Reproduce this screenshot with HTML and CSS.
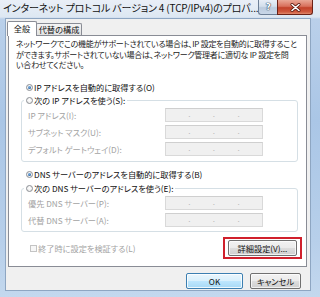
FILE: index.html
```html
<!DOCTYPE html>
<html lang="ja">
<head>
<meta charset="utf-8">
<title>TCP/IPv4</title>
<link rel="stylesheet" href="styles.css">
</head>
<body>
<div class="window">
  <div class="titlebar">
    <span class="title">インターネット プロトコル バージョン 4 (TCP/IPv4)のプロパ...</span>
    <div class="caption">
      <span class="cap-help">?</span>
      <span class="cap-close">
        <svg width="11" height="9" viewBox="0 0 11 9"><path d="M2 1.5 L9 7.5 M9 1.5 L2 7.5" stroke="#5a1a10" stroke-width="3" stroke-linecap="round"/><path d="M2 1.5 L9 7.5 M9 1.5 L2 7.5" stroke="#ffffff" stroke-width="1.6" stroke-linecap="round"/></svg>
      </span>
    </div>
  </div>
  <div class="client">
    <div class="tabs">
      <span class="tab active">全般</span>
      <span class="tab">代替の構成</span>
    </div>
    <div class="panel">
      <p class="desc">ネットワークでこの機能がサポートされている場合は、IP 設定を自動的に取得すること<br>ができます。サポートされていない場合は、ネットワーク管理者に適切な IP 設定を問<br>い合わせてください。</p>
      <div class="opt first"><span class="radio on"></span>IP アドレスを自動的に取得する(O)</div>
      <div class="group g1">
        <div class="legend"><span class="radio"></span>次の IP アドレスを使う(S):</div>
        <div class="row"><span class="lbl">IP アドレス(I):</span><span class="ip"><i>.</i><i>.</i><i>.</i></span></div>
        <div class="row"><span class="lbl">サブネット マスク(U):</span><span class="ip"><i>.</i><i>.</i><i>.</i></span></div>
        <div class="row"><span class="lbl">デフォルト ゲートウェイ(D):</span><span class="ip"><i>.</i><i>.</i><i>.</i></span></div>
      </div>
      <div class="opt second"><span class="radio on"></span>DNS サーバーのアドレスを自動的に取得する(B)</div>
      <div class="group g2">
        <div class="legend"><span class="radio"></span>次の DNS サーバーのアドレスを使う(E):</div>
        <div class="row"><span class="lbl">優先 DNS サーバー(P):</span><span class="ip"><i>.</i><i>.</i><i>.</i></span></div>
        <div class="row"><span class="lbl">代替 DNS サーバー(A):</span><span class="ip"><i>.</i><i>.</i><i>.</i></span></div>
      </div>
      <div class="bottom-row">
        <div class="check"><span class="box"></span>終了時に設定を検証する(L)</div>
        <span class="highlight"><span class="btn adv">詳細設定(V)...</span></span>
      </div>
    </div>
    <div class="buttons">
      <span class="btn ok">OK</span>
      <span class="btn cancel">キャンセル</span>
    </div>
  </div>
</div>
</body>
</html>
```

FILE: styles.css
```css
* { box-sizing: border-box; margin: 0; padding: 0; }
html, body { width: 320px; height: 297px; overflow: hidden; }
body {
  font-family: "Noto Sans CJK JP", "Noto Sans", sans-serif;
  font-feature-settings: "palt";
  font-size: 8.2px;
  color: #1b1b1b;
  background: #b8cfe9;
}
.window {
  width: 320px;
  height: 297px;
  display: flex;
  flex-direction: column;
  background: linear-gradient(180deg, #e9eff7 0px, #dde7f2 17px, #bad0ea 19px, #aac6e6 120px, #b7cfea 240px, #c3d8ee 297px);
}
.titlebar {
  height: 18px;
  flex: none;
  display: flex;
  align-items: flex-start;
  padding-left: 3px;
  padding-right: 7px;
}
.title {
  flex: 1;
  font-size: 10px;
  line-height: 15px;
  color: #111;
  white-space: nowrap;
  letter-spacing: -0.15px;
}
.caption { display: flex; }
.cap-help, .cap-close {
  height: 15px;
  display: flex;
  align-items: center;
  justify-content: center;
  border: 1px solid #6d7f96;
  border-top: none;
}
.cap-help {
  width: 19px;
  border-radius: 0 0 0 3px;
  border-right: none;
  background: linear-gradient(180deg, #e8eef6 0, #d3dfec 45%, #bccbdd 55%, #c9d7e8 100%);
  color: #fff;
  font-family: "DejaVu Sans", sans-serif;
  font-weight: bold;
  font-size: 9px;
  text-shadow: 0 0 1px #36485e, 0 0 1px #36485e, 0 0 1px #36485e;
}
.cap-close {
  width: 36px;
  border-radius: 0 0 3px 0;
  border-color: #6b2116;
  background: linear-gradient(180deg, #e9a796 0, #d8705c 45%, #c2412a 55%, #cf5a3f 85%, #e08a6d 100%);
}
.client {
  flex: 1;
  margin: 0 9px 6px 5px;
  background: #f0f0f0;
  border: 1px solid #8ea6c2;
  display: flex;
  flex-direction: column;
}
.tabs {
  display: flex;
  align-items: flex-end;
  padding-top: 2px;
  margin-left: 1px;
}
.tab {
  border: 1px solid #898c95;
  border-bottom: none;
  white-space: nowrap;
  text-align: center;
  color: #111;
}
.tab.active {
  position: relative;
  z-index: 1;
  width: 30px;
  height: 15px;
  line-height: 13px;
  margin-bottom: -1px;
  background: #fff;
  border-radius: 2px 2px 0 0;
}
.tab:not(.active) {
  width: 46px;
  height: 12px;
  line-height: 11px;
  margin-left: -1px;
  background: linear-gradient(180deg, #f4f4f4, #e2e2e2);
  border-radius: 2px 2px 0 0;
}
.panel {
  margin: 0 3px 0 2px;
  border: 1px solid #898c95;
  background: #fff;
  display: flex;
  flex-direction: column;
  padding-bottom: 7px;
}
.desc {
  margin: 3px 0 0 7px;
  line-height: 10.5px;
  white-space: nowrap;
  color: #222;
  font-size: 8px;
  letter-spacing: -0.25px;
}
.opt {
  display: flex;
  align-items: center;
  height: 12px;
  margin-left: 17px;
  white-space: nowrap;
  color: #111;
}
.opt.first { margin-top: 10.5px; }
.opt.second { margin-top: 6px; }
.radio {
  width: 7px;
  height: 7px;
  flex: none;
  border-radius: 50%;
  border: 1px solid #8b8e94;
  background: radial-gradient(circle at 50% 40%, #ffffff 0, #e6e6e6 100%);
  margin-right: 1px;
  display: flex;
  align-items: center;
  justify-content: center;
}
.radio.on::after {
  content: "";
  width: 3px;
  height: 3px;
  border-radius: 50%;
  background: radial-gradient(circle at 40% 35%, #7fb5ea 0, #1f5a98 80%);
}
.group {
  display: flex;
  flex-direction: column;
  margin: 7px 8px 0 12px;
  border: 1px solid #d5dfe5;
  border-radius: 3px;
}
.g1 { padding-bottom: 5px; }
.g2 { margin-top: 8px; padding-bottom: 4px; }
.legend {
  align-self: flex-start;
  display: flex;
  align-items: center;
  height: 12px;
  margin: -7px 0 0 2px;
  padding: 0 2px;
  background: #fff;
  white-space: nowrap;
  color: #111;
}
.row {
  display: flex;
  align-items: center;
  height: 14px;
  margin-top: 3px;
}
.legend + .row { margin-top: 2px; }
.lbl {
  width: 143px;
  padding-left: 6px;
  white-space: nowrap;
  color: #a3a3a3;
}
.ip {
  width: 98px;
  height: 14px;
  display: flex;
  justify-content: space-evenly;
  align-items: center;
  background: #f0f0f0;
  border: 1px solid #d9d9d9;
  border-top-color: #cfcfcf;
}
.ip i {
  font-style: normal;
  color: #b8b8b8;
  font-size: 8px;
  line-height: 8px;
  margin-top: -2px;
}
.bottom-row {
  display: flex;
  justify-content: space-between;
  align-items: center;
  margin: 5px 4px 0 21px;
}
.check {
  display: flex;
  align-items: center;
  color: #a3a3a3;
  white-space: nowrap;
}
.box {
  width: 7px;
  height: 7px;
  border: 1px solid #c4c4c4;
  background: #f7f7f7;
  margin-right: 1px;
}
.highlight {
  display: flex;
  padding: 1px 3px;
  border: 2px solid #d0202c;
}
.btn {
  display: flex;
  align-items: center;
  justify-content: center;
  height: 16px;
  border: 1px solid #707070;
  border-radius: 2px;
  background: linear-gradient(180deg, #f2f2f2 0, #ebebeb 48%, #dddddd 52%, #cfcfcf 100%);
  box-shadow: inset 0 0 0 1px rgba(255,255,255,0.7);
  white-space: nowrap;
  color: #111;
}
.adv { width: 69px; }
.buttons {
  display: flex;
  justify-content: flex-end;
  gap: 7px;
  margin-top: 6px;
  padding-right: 9px;
}
.ok {
  width: 57px;
  border-color: #3c7fb1;
  background: linear-gradient(180deg, #eaf6fd 0, #d9f0fc 48%, #bee6fd 52%, #a7d9f5 100%);
  box-shadow: inset 0 0 0 1px rgba(255,255,255,0.8);
}
.cancel { width: 51px; }
```
